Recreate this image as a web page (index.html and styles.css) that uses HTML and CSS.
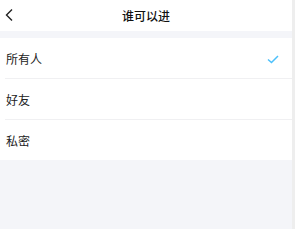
FILE: index.html
```html
<!DOCTYPE html>
<html lang="zh">
<head>
<meta charset="utf-8">
<link rel="stylesheet" href="styles.css">
</head>
<body>
<div class="page">
  <header class="nav">
    <svg class="back" width="10" height="14" viewBox="0 0 10 14"><path d="M8 1.5 L2.5 7 L8 12.5" fill="none" stroke="#222" stroke-width="1.4"/></svg>
    <div class="title">谁可以进</div>
  </header>
  <div class="list">
    <div class="row"><span>所有人</span>
      <svg class="check" width="12" height="9" viewBox="0 0 12 9"><path d="M1 4.5 L4.5 7.5 L11 1" fill="none" stroke="#4cc0fb" stroke-width="1.5"/></svg>
    </div>
    <div class="row"><span>好友</span></div>
    <div class="row"><span>私密</span></div>
  </div>
</div>
</body>
</html>
```
FILE: styles.css
```css
html, body { margin: 0; padding: 0; }
body {
  width: 295px; height: 229px; overflow: hidden;
  background: #eeeeee;
  font-family: "Noto Sans CJK SC", "Noto Sans", sans-serif;
  color: #222;
}
.page {
  width: 292px; height: 229px;
  background: #f4f5f9;
}
.nav {
  height: 31px; background: #fff;
  display: flex; align-items: center; justify-content: center;
  position: relative;
}
.back { position: absolute; left: 4px; top: 8px; }
.title { font-size: 12px; font-weight: 500; color: #111; }
.list { margin-top: 7px; background: #fff; padding-left: 5px; }
.row {
  height: 40px; display: flex; align-items: center; justify-content: space-between;
  font-size: 12px; padding-left: 1px; padding-right: 13px;
  border-bottom: 1px solid #f0f0f2;
}
.row:last-child { border-bottom: none; }
.check { margin-top: 2px; }
```
